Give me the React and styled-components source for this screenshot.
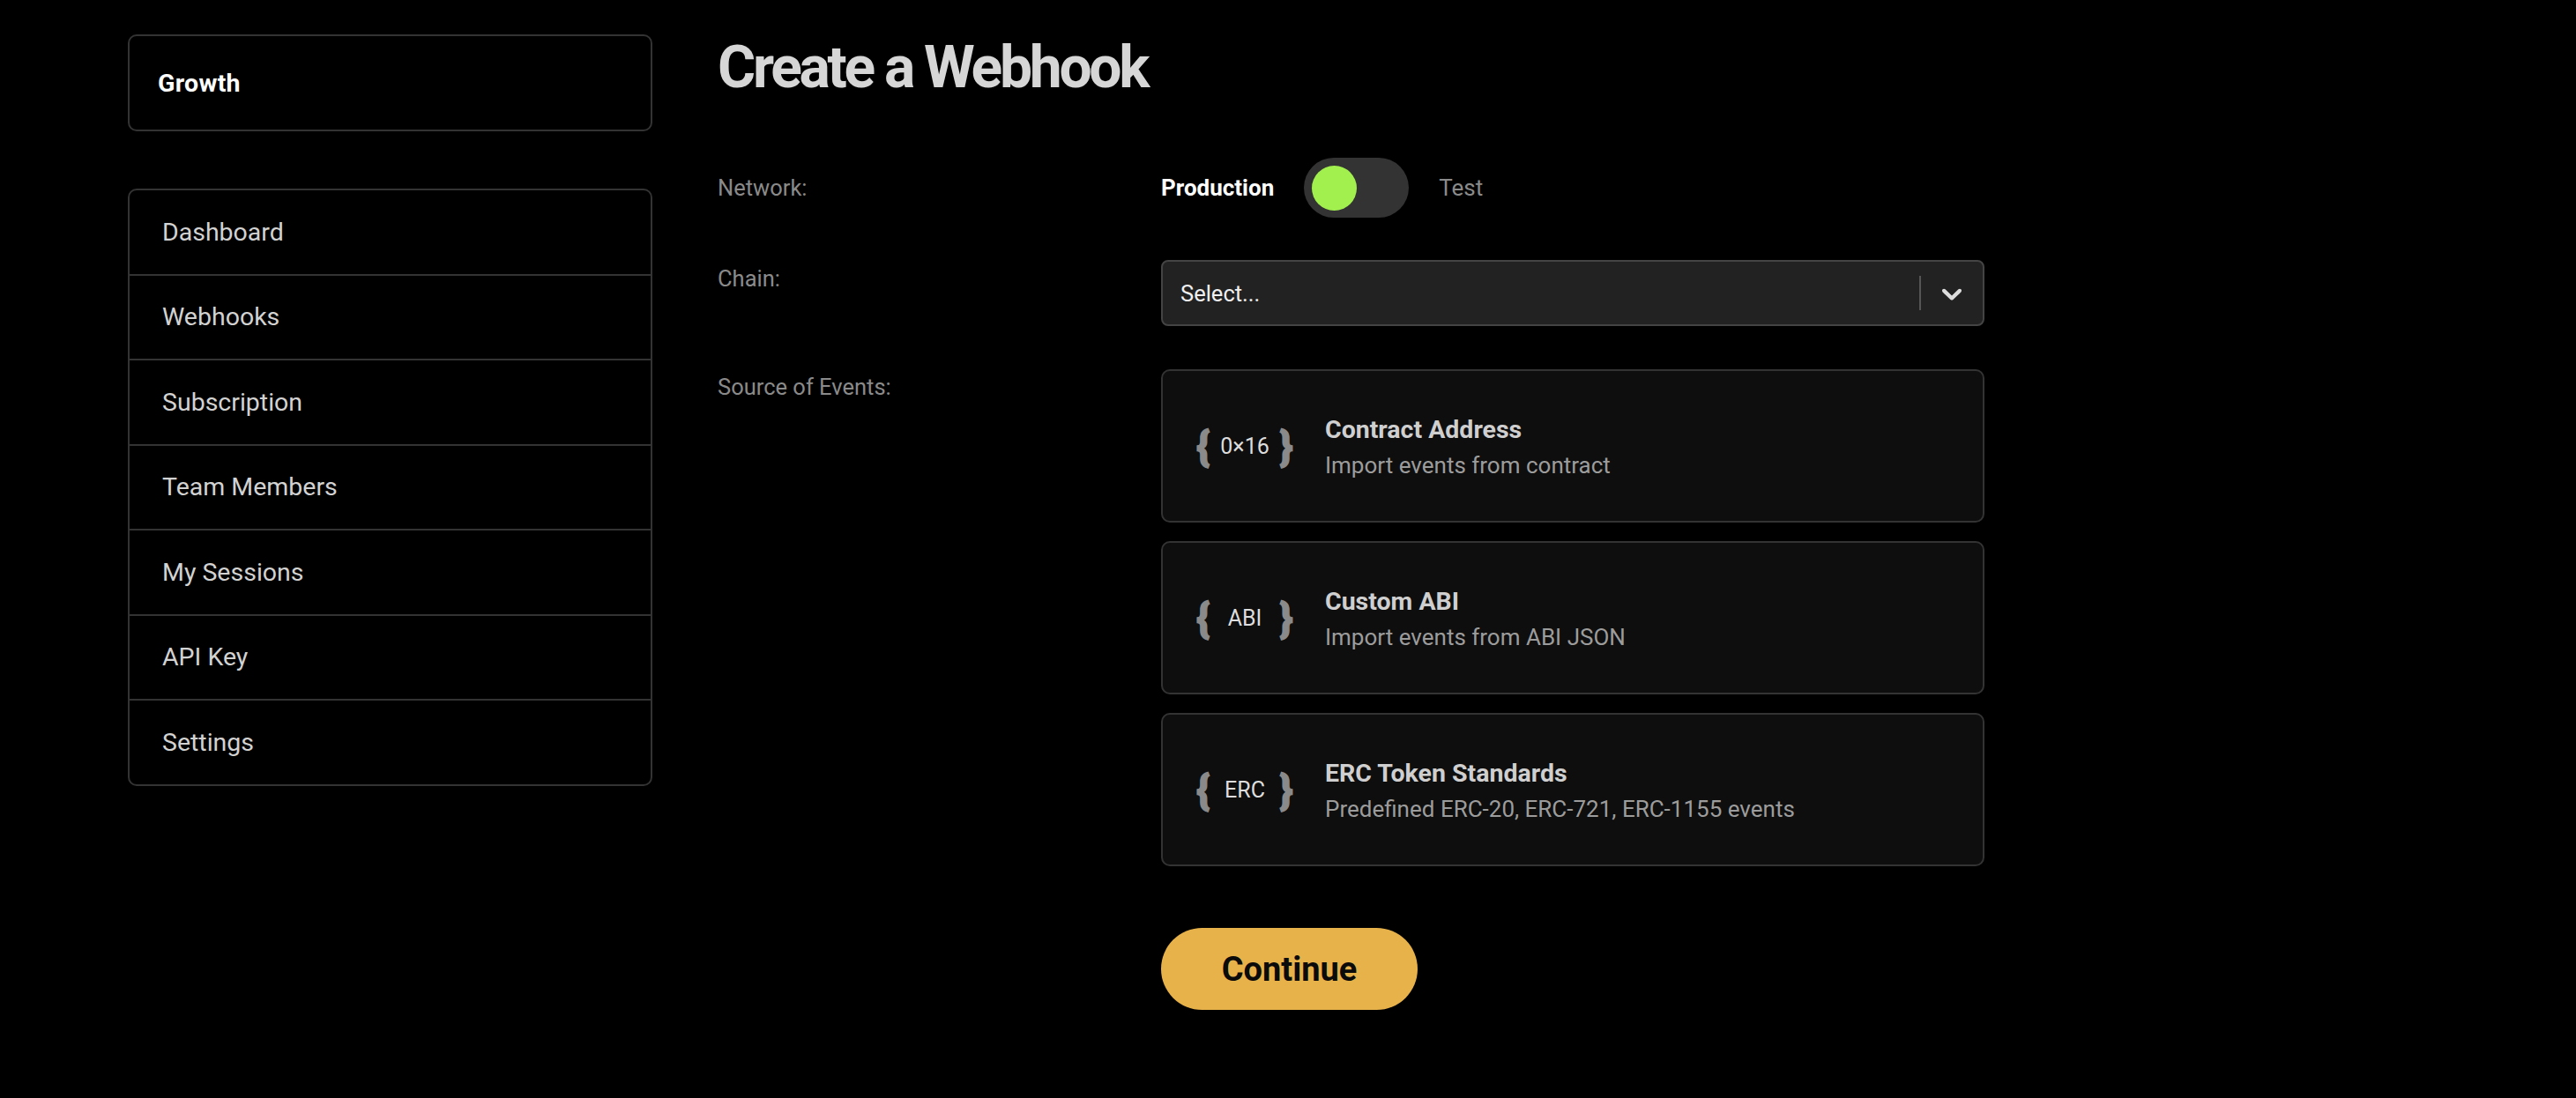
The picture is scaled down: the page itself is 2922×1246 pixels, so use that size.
import React, { useState } from 'react';
import styled, { createGlobalStyle } from 'styled-components';

const GlobalStyle = createGlobalStyle`
    html, body {
        margin: 0;
        padding: 0;
        background: #000;
    }

    body {
        font-family: Roboto, "Liberation Sans", sans-serif;
        color: #d4d4d4;
    }

    * {
        box-sizing: border-box;
    }
`;

const Page = styled.div`
    display: flex;
    gap: 74px;
    min-height: 1246px;
    padding: 39px 0 0 145px;
    background: #000;
`;

const Sidebar = styled.aside`
    width: 595px;
    flex-shrink: 0;
    display: flex;
    flex-direction: column;
    gap: 65px;
`;

const WorkspaceBox = styled.div`
    height: 110px;
    display: flex;
    align-items: center;
    padding-left: 32px;
    border: 2px solid #333;
    border-radius: 10px;
    font-size: 28.5px;
    font-weight: 700;
    letter-spacing: 0.3px;
    color: #fff;
`;

const Nav = styled.nav`
    display: flex;
    flex-direction: column;
    border: 2px solid #333;
    border-radius: 10px;
    overflow: hidden;
`;

const NavItem = styled.a`
    box-sizing: content-box;
    height: 94.5px;
    display: flex;
    align-items: center;
    padding-left: 37px;
    font-size: 28.5px;
    color: #d2d2d2;
    text-decoration: none;
    cursor: pointer;

    & + & {
        border-top: 2px solid #333;
    }
`;

const Main = styled.main`
    display: flex;
    flex-direction: column;
`;

const Title = styled.h1`
    margin: 5px 0 0;
    font-size: 66px;
    line-height: 66px;
    font-weight: 700;
    letter-spacing: -0.05em;
    color: #d6d6d6;
`;

const Form = styled.div`
    margin-top: 69px;
    display: grid;
    grid-template-columns: 503px 934px;
    row-gap: 48px;
`;

const Label = styled.div`
    align-self: ${(p) => (p.$center ? 'center' : 'start')};
    font-size: 25.5px;
    line-height: 42px;
    color: #8a8a8a;
`;

const NetworkSwitch = styled.div`
    height: 68px;
    display: flex;
    align-items: center;
    gap: 34px;
`;

const NetworkOption = styled.span`
    font-size: 26px;
    font-weight: ${(p) => (p.$active ? 700 : 400)};
    color: ${(p) => (p.$active ? '#fff' : '#8a8a8a')};
`;

const Toggle = styled.button`
    width: 119px;
    height: 68px;
    padding: 0 9px;
    display: flex;
    align-items: center;
    justify-content: ${(p) => (p.$on ? 'flex-start' : 'flex-end')};
    border: none;
    border-radius: 34px;
    background: #333;
    cursor: pointer;
`;

const Knob = styled.span`
    width: 51px;
    height: 51px;
    border-radius: 50%;
    background: #a2f04e;
`;

const SelectBox = styled.div`
    height: 75px;
    display: flex;
    align-items: center;
    border: 2px solid #444;
    border-radius: 8px;
    background: #222;
    cursor: pointer;
`;

const SelectValue = styled.div`
    flex: 1;
    padding-left: 20px;
    font-size: 25.5px;
    color: #f0f0f0;
`;

const Separator = styled.span`
    align-self: stretch;
    width: 2px;
    margin: 16px 0;
    background: #555;
`;

const Indicator = styled.div`
    display: flex;
    padding: 0 16px;
    color: #ddd;
`;

const SourceList = styled.div`
    margin-top: 1px;
    display: flex;
    flex-direction: column;
    gap: 21px;
`;

const SourceCard = styled.button`
    height: 174px;
    display: flex;
    align-items: center;
    gap: 36px;
    padding: 0 0 0 38px;
    border: 2px solid #333;
    border-radius: 10px;
    background: #0e0e0e;
    font-family: inherit;
    text-align: left;
    cursor: pointer;
`;

const BraceIcon = styled.div`
    width: 110px;
    display: flex;
    align-items: center;
`;

const Brace = styled.span`
    width: 16px;
    display: flex;
    justify-content: center;
    font-size: 47px;
    font-weight: 900;
    line-height: 1;
    color: #8a8a8a;
    -webkit-text-stroke: 1.5px #8a8a8a;
`;

const BraceText = styled.span`
    flex: 1;
    text-align: center;
    font-size: 25px;
    color: #ddd;
`;

const CardText = styled.div`
    display: flex;
    flex-direction: column;
`;

const CardTitle = styled.div`
    font-size: 28.5px;
    line-height: 40px;
    font-weight: 700;
    color: #cfcfcf;
`;

const CardSub = styled.div`
    margin-top: 4px;
    font-size: 26px;
    line-height: 32px;
    color: #9c9c9c;
`;

const ContinueButton = styled.button`
    grid-column: 2;
    justify-self: start;
    margin-top: 22px;
    width: 291px;
    height: 93px;
    border: none;
    border-radius: 47px;
    background: #e8b24a;
    font-family: inherit;
    font-size: 38px;
    font-weight: 700;
    color: #0b0b0b;
    cursor: pointer;
`;

const navItems = ['Dashboard', 'Webhooks', 'Subscription', 'Team Members', 'My Sessions', 'API Key', 'Settings'];

const sources = [
    { tag: '0×16', title: 'Contract Address', sub: 'Import events from contract' },
    { tag: 'ABI', title: 'Custom ABI', sub: 'Import events from ABI JSON' },
    { tag: 'ERC', title: 'ERC Token Standards', sub: 'Predefined ERC-20, ERC-721, ERC-1155 events' },
];

function ChevronDown() {
    return (
        <svg width="38" height="38" viewBox="0 0 20 20" fill="currentColor">
            <path d="M4.516 7.548c0.436-0.446 1.043-0.481 1.576 0l3.908 3.747 3.908-3.747c0.533-0.481 1.141-0.446 1.574 0 0.436 0.445 0.408 1.197 0 1.615-0.406 0.418-4.695 4.502-4.695 4.502-0.217 0.223-0.502 0.335-0.787 0.335s-0.57-0.112-0.789-0.335c0 0-4.287-4.084-4.695-4.502s-0.436-1.17 0-1.615z" />
        </svg>
    );
}

export default function App() {

    const [ production, setProduction ] = useState(true);

    return (
        <>
            <GlobalStyle />
            <Page>
                <Sidebar>
                    <WorkspaceBox>Growth</WorkspaceBox>
                    <Nav>
                        {navItems.map((item) => (
                            <NavItem key={item}>{item}</NavItem>
                        ))}
                    </Nav>
                </Sidebar>

                <Main>
                    <Title>Create a Webhook</Title>
                    <Form>
                        <Label $center>Network:</Label>
                        <NetworkSwitch>
                            <NetworkOption $active={production}>Production</NetworkOption>
                            <Toggle $on={production} onClick={() => setProduction(!production)}>
                                <Knob />
                            </Toggle>
                            <NetworkOption $active={!production}>Test</NetworkOption>
                        </NetworkSwitch>

                        <Label>Chain:</Label>
                        <SelectBox>
                            <SelectValue>Select...</SelectValue>
                            <Separator />
                            <Indicator>
                                <ChevronDown />
                            </Indicator>
                        </SelectBox>

                        <Label>Source of Events:</Label>
                        <SourceList>
                            {sources.map((s) => (
                                <SourceCard key={s.title}>
                                    <BraceIcon>
                                        <Brace>{'{'}</Brace>
                                        <BraceText>{s.tag}</BraceText>
                                        <Brace>{'}'}</Brace>
                                    </BraceIcon>
                                    <CardText>
                                        <CardTitle>{s.title}</CardTitle>
                                        <CardSub>{s.sub}</CardSub>
                                    </CardText>
                                </SourceCard>
                            ))}
                        </SourceList>

                        <ContinueButton>Continue</ContinueButton>
                    </Form>
                </Main>
            </Page>
        </>
    );
}
